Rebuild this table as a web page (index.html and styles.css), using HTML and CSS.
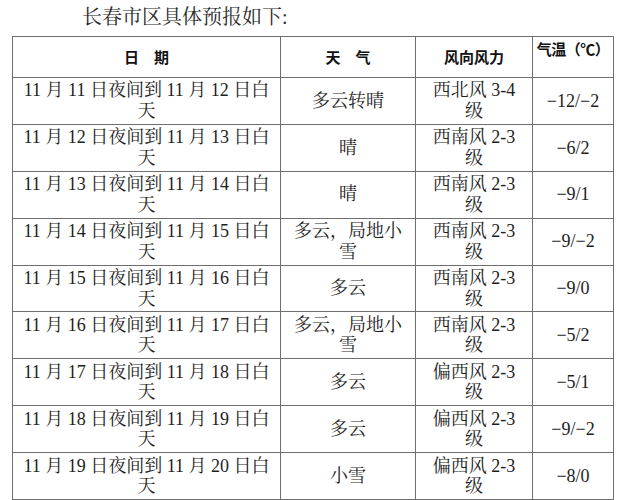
FILE: index.html
```html
<!DOCTYPE html>
<html lang="zh-CN">
<head>
<meta charset="utf-8">
<link rel="stylesheet" href="styles.css">
<title>长春市区具体预报</title>
</head>
<body>
<p class="title">长春市区具体预报如下:</p>
<table class="fc">
  <colgroup>
    <col class="c1"><col class="c2"><col class="c3"><col class="c4">
  </colgroup>
  <tr class="hd">
    <th>日　期</th>
    <th>天　气</th>
    <th>风向风力</th>
    <th class="temp">气温（℃）</th>
  </tr>
  <tr><td>11 月 11 日夜间到 11 月 12 日白<br>天</td><td>多云转晴</td><td>西北风 3-4<br>级</td><td>−12/−2</td></tr>
  <tr><td>11 月 12 日夜间到 11 月 13 日白<br>天</td><td>晴</td><td>西南风 2-3<br>级</td><td>−6/2</td></tr>
  <tr><td>11 月 13 日夜间到 11 月 14 日白<br>天</td><td>晴</td><td>西南风 2-3<br>级</td><td>−9/1</td></tr>
  <tr><td>11 月 14 日夜间到 11 月 15 日白<br>天</td><td>多云，局地小<br>雪</td><td>西南风 2-3<br>级</td><td>−9/−2</td></tr>
  <tr><td>11 月 15 日夜间到 11 月 16 日白<br>天</td><td>多云</td><td>西南风 2-3<br>级</td><td>−9/0</td></tr>
  <tr><td>11 月 16 日夜间到 11 月 17 日白<br>天</td><td>多云，局地小<br>雪</td><td>西南风 2-3<br>级</td><td>−5/2</td></tr>
  <tr><td>11 月 17 日夜间到 11 月 18 日白<br>天</td><td>多云</td><td>偏西风 2-3<br>级</td><td>−5/1</td></tr>
  <tr><td>11 月 18 日夜间到 11 月 19 日白<br>天</td><td>多云</td><td>偏西风 2-3<br>级</td><td>−9/−2</td></tr>
  <tr><td>11 月 19 日夜间到 11 月 20 日白<br>天</td><td>小雪</td><td>偏西风 2-3<br>级</td><td>−8/0</td></tr>
</table>
</body>
</html>
```
FILE: styles.css
```css
html, body {
  margin: 0;
  padding: 0;
  background: #ffffff;
}
body {
  font-family: "Liberation Serif", "Noto Serif CJK SC", "Noto Sans CJK SC", serif;
  color: #1e1e1e;
}
.title {
  margin: 0;
  padding: 5px 0 0 82px;
  height: 36px;
  box-sizing: border-box;
  font-size: 20px;
  line-height: 24px;
  color: #2a2a2a;
}
.fc {
  margin-left: 12px;
  width: 601px;
  border-collapse: collapse;
  table-layout: fixed;
  font-size: 18px;
  line-height: 20.5px;
}
.c1 { width: 268px; }
.c2 { width: 135px; }
.c3 { width: 117px; }
.c4 { width: 81px; }
.fc th, .fc td {
  border: 1px solid #6e6e6e;
  padding: 0 4px;
  text-align: center;
  vertical-align: middle;
}
.fc td {
  height: 45.9px;
  font-weight: normal;
}
.fc th {
  height: 37px;
  font-family: "Noto Sans CJK SC", sans-serif;
  font-size: 15px;
  line-height: 18px;
  font-weight: 700;
  color: #111;
}
.fc th.temp {
  vertical-align: top;
  padding: 3px 0 0;
  white-space: nowrap;
  letter-spacing: -0.5px;
}
```
